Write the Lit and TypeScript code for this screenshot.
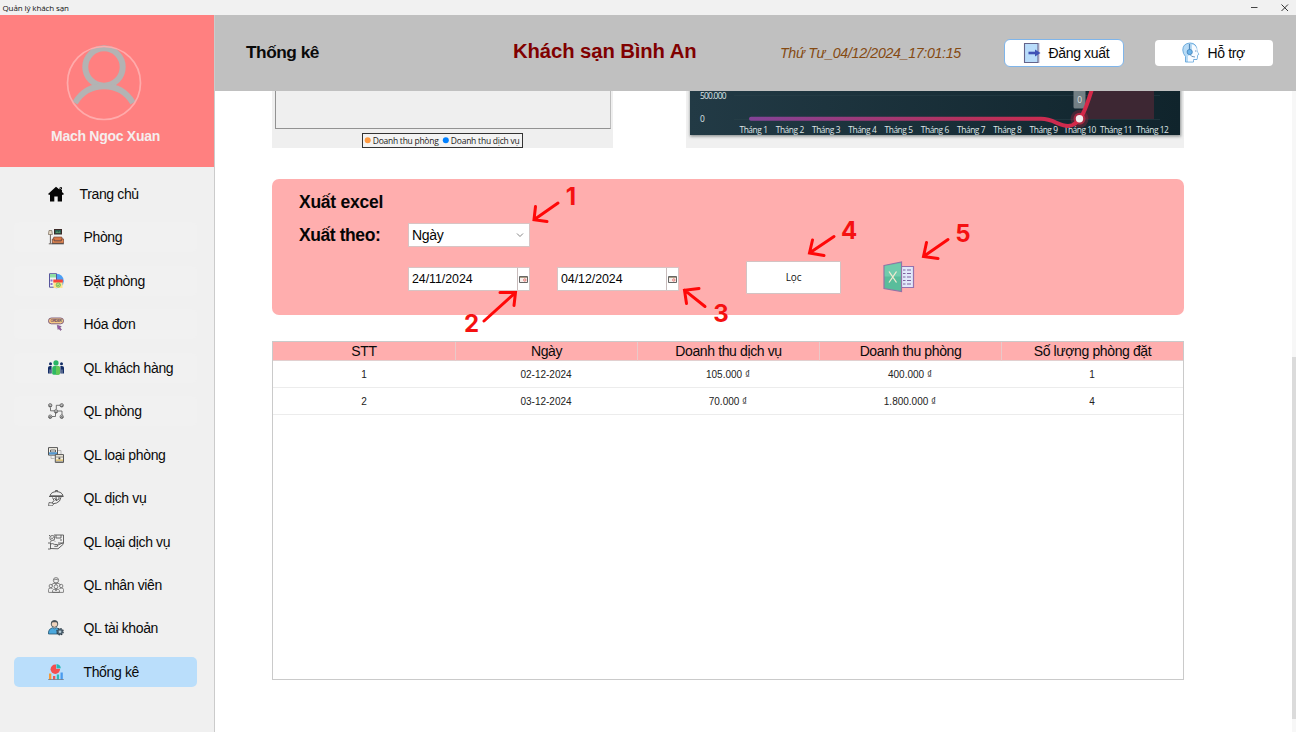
import { LitElement, html, css, svg } from "lit";
import { customElement } from "lit/decorators.js";
import { classMap } from "lit/directives/class-map.js";

const icons = {
  home: svg`<path d="M8 .8 0 8l1.2 1 .8-.6V15.500h4.300V10.500h3.400v5H14V8.400l.8.6L16 8l-2-1.900V1.300h-2.600v2.300z" fill="#050505"/><path d="m10.800 1 3.500 3.200" stroke="#efefef" stroke-width=".6"/>`,
  room: svg`<path d="M6 0h8v5.500H6z" fill="#3b2a28"/><path d="M7 1h6v3.500H7z" fill="#2c5b50"/><path d="m7.500 4 1.500-2 1.500 1.500L11.500 2l1 2z" fill="#57956a"/><path d="M1 1.500h2.800l.6 4H.4z" fill="#e6dac6" stroke="#645547" stroke-width=".6"/><path d="M2.400 5.500v9M.8 14.800h3.300" stroke="#5a504b" stroke-width=".9"/><path d="M5.800 8h8l1 3.500H5z" fill="#d97745" stroke="#6a3e30" stroke-width=".6"/><path d="M4.300 10h1.800v2h7.300v-2h2.300v4.200H4.300z" fill="#e48b56" stroke="#6a3e30" stroke-width=".7"/><path d="M4 14.800h11.800" stroke="#222" stroke-width=".8"/>`,
  booking: svg`<circle cx="8.500" cy="8" r="7.300" fill="#4c9ff5"/><path d="M1.500.7h7v13.500h-7z" fill="#ecf5f4" stroke="#57559c"/><path d="M2 1h6v3.500H2z" fill="#8fdda4"/><path d="M2.500 6.500h2v2h-2zM2.500 10h2v2h-2z" fill="#8e73ce"/><path d="M5.500 8h9v7h-9z" fill="#ffe58d"/><path d="M5.300 6.500h9.500v3H5.300z" fill="#f4443d"/><circle cx="10.300" cy="12" r="2.200" fill="#bce57b" stroke="#62ae59" stroke-width=".7"/><path d="m9.300 12 .8.8 1.300-1.400" fill="none" stroke="#42884a" stroke-width=".6"/>`,
  order: svg`<rect x=".5" y="2" width="15" height="5.800" rx="2.800" fill="#f6ca83" stroke="#785579" stroke-width=".9"/><text x="2.500" y="6.200" font-family="Liberation Sans" font-size="3.500" font-weight="700" fill="#604365" textLength="11">ORDER</text><path d="m9.300 9.200 4 1.400-1.400 1 1.600 2-1.100.9-1.500-2-.9 1z" fill="#995eae" stroke="#694371" stroke-width=".5"/>`,
  customers: svg`<circle cx="2.500" cy="3.800" r="1.500" fill="#132d66"/><circle cx="13.500" cy="3.800" r="1.500" fill="#132d66"/><path d="M0 13.500V7.800Q0 6 2 6h1.600v7.500zM12.400 13.500V6H14q2 0 2 1.800v5.700z" fill="#132d66"/><circle cx="8" cy="2.900" r="2.600" fill="#29b564"/><path d="M4.200 14V8q0-2 2-2h3.600q2 0 2 2v6l-1.500.8H5.500z" fill="#2db862"/><path d="M8 6h2q2 0 2 2v6l-1.500.8H8z" fill="#63c755"/><path d="M2 9.500v4M14 9.500v4" stroke="#efefef" stroke-width=".6"/>`,
  network: svg`<g fill="none" stroke="#555" stroke-width=".8"><path d="M2.500 4.500v3.300H6M12 2.300H8.300V6M10 8h4v4M7.500 10v3.500H4"/>${[[2.200, 2.300], [13.700, 2.300], [8, 8.300], [2.200, 13.700], [13.700, 13.700]].map(([x, y]) => svg`<circle cx=${x} cy=${y} r="1.700"/><path d="M${x - 0.9} ${y + 0.4} ${x} ${y - 0.7}l1 1.100v.9h-2z"/>`)}</g>`,
  roomTypes: svg`<path d="M.5.600h9v7.500h-9z" fill="#f7f3e9" stroke="#555"/><path d="M2.500 3h5v2h-5z" fill="#fff" stroke="#444" stroke-width=".8"/><path d="M1 5.300h8v2.200H1z" fill="#5399d3"/><path d="M7.300 7.600h8.200v7.800H7.300z" fill="#f4efe1" stroke="#555"/><path d="M7.500 10h8M7.500 14.200h8" stroke="#666" stroke-width=".7"/><path d="M10.500 10.500h1.800v2h-1.800z" fill="#444"/><path d="M8 12.500h7v1.300H8z" fill="#dfbe66"/><path d="M3 8.500v3h3.500M10 3.500h3v3.500" fill="none" stroke="#999" stroke-width=".6"/>`,
  service: svg`<g fill="none" stroke="#4b4b4b" stroke-width=".9"><path d="M2 5.800Q3 1.800 8.500 1.600 14 1.800 15 5.800zM1 6.500h14.600M7.500 1.500V.500h2v1"/><path d="M4.500 7.500 6 10.500 4 13M13 7.200 11.500 11 8.500 13 5 13.800M8 7l.5 3.500L11 9V7M6.500 8l2 3"/></g><path d="m1 12.500 3.500.5 1 1.500-1.500 1.300H.5z" fill="#efefef" stroke="#555" stroke-width=".8"/>`,
  serviceTypes: svg`<g fill="none" stroke="#555" stroke-width=".9"><path d="M6 1h9.500v8H10M8 1v3h5V1M12 6h2"/><circle cx="4.300" cy="4" r="2.500"/><path d="m3.200 4 1 .8 1.300-1.600M1 1l1 1M6 6.500l1 1M3 7l-.5 1.500"/><path d="M0 9h2.500v6H0M2.500 10q2-1 4 .4l3 .2v1.700H6.300M10 11l4.600-2 .9 1-5.500 4.800-7.500-.3"/></g>`,
  staff: svg`<g fill="none" stroke="#606060" stroke-width=".75"><circle cx="8" cy="3.300" r="2.700"/><path d="M4 8.500V7.500Q4 6.200 8 6.200t4 1.300v1M5.800 3q2-1.500 4.400 0M8 6v2"/><circle cx="2.800" cy="9" r="1.700"/><circle cx="8" cy="9.700" r="1.900"/><circle cx="13.200" cy="9" r="1.700"/><path d="M.4 15v-2.500q0-1.500 2.300-1.500 1.500 0 2 1M15.600 15v-2.500q0-1.500-2.300-1.500-1.500 0-2 1M4.600 15.400V13.500Q4.600 12 8 12t3.400 1.500v1.900zM.4 15.400h15.200M7 12l1 2 1-2"/></g>`,
  account: svg`<circle cx="6.500" cy="4" r="3.300" fill="#f0d3bc" stroke="#34444d" stroke-width=".8"/><path d="M3 4Q2.800.300 6.500.300T10 4L8.500 2.300h-4z" fill="#485158"/><path d="M.5 14v-2q0-3 4-4.300l2 1 2-1q4 1.300 4 4.300v2z" fill="#4ba8dd" stroke="#275771" stroke-width=".8"/><circle cx="12" cy="11.700" r="3" fill="#4d6271"/><circle cx="12" cy="11.700" r="3.200" fill="none" stroke="#2c3a45" stroke-width="1.200" stroke-dasharray="1.500 1"/><circle cx="12" cy="11.700" r="1.300" fill="#b8cbd5"/>`,
  stats: svg`<circle cx="7.300" cy="5.300" r="4.700" fill="#f54e4e"/><path d="M8 4.800V-.2q4.700.6 5 5z" fill="#badefb"/><path d="M8.500 4.300V0q4 .5 4.300 4.300z" fill="#27b8b5"/><path d="M1 9.500h2.300v6H1z" fill="#f89a36"/><path d="M5 12h2.300v3.500H5z" fill="#ef5454"/><path d="M8.800 10.500h2.300v5H8.800z" fill="#2ebbb6"/><path d="M12.500 8.500h2.300v7h-2.300z" fill="#4a9bee"/><path d="M.2 15.600h15.600" stroke="#6d707b" stroke-width=".8"/>`,
};

const menu: { label: string; icon: unknown; kind?: string }[] = [
  { label: "Trang chủ", icon: icons.home, kind: "home" },
  { label: "Phòng", icon: icons.room, kind: "soft" },
  { label: "Đặt phòng", icon: icons.booking, kind: "soft" },
  { label: "Hóa đơn", icon: icons.order, kind: "soft" },
  { label: "QL khách hàng", icon: icons.customers, kind: "soft" },
  { label: "QL phòng", icon: icons.network, kind: "soft" },
  { label: "QL loại phòng", icon: icons.roomTypes },
  { label: "QL dịch vụ", icon: icons.service },
  { label: "QL loại dịch vụ", icon: icons.serviceTypes },
  { label: "QL nhân viên", icon: icons.staff },
  { label: "QL tài khoản", icon: icons.account },
  { label: "Thống kê", icon: icons.stats, kind: "active" },
];

const columns = ["STT", "Ngày", "Doanh thu dịch vụ", "Doanh thu phòng", "Số lượng phòng đặt"];
const rows = [
  ["1", "02-12-2024", "105.000 ₫", "400.000 ₫", "1"],
  ["2", "03-12-2024", "70.000 ₫", "1.800.000 ₫", "4"],
];

@customElement("side-menu")
class SideMenu extends LitElement {
  static styles = css`
    :host { display: flex; flex-direction: column; width: 214px; border-right: 1px solid #cbcbcb; background: #f0f0f0; font-family: "Liberation Sans", sans-serif; }
    .profile { height: 152px; box-sizing: border-box; padding-top: 30px; background: #ff8080; display: flex; flex-direction: column; align-items: center; }
    .avatar { width: 76px; height: 76px; margin-right: 6px; }
    .name { margin: 6px 3px 0 0; font: 700 14px/18px "Liberation Sans", sans-serif; letter-spacing: -.28px; color: #f5eeee; white-space: nowrap; }
    .menu { display: grid; gap: 13.450px; padding: 12px 17px 0 14px; }
    .item { height: 30px; border-radius: 5px; display: flex; align-items: center; gap: 19.500px; padding-left: 34px; font-size: 14px; letter-spacing: -.36px; color: #0a0a0a; white-space: nowrap; }
    .home { gap: 15.500px; }
    .soft { background: #f1f1f1; }
    .active { background: #badefb; }
    .icon { width: 16px; height: 16px; flex: none; }
  `;
  render() {
    return html`
      <div class="profile">
        <svg class="avatar" viewBox="0 0 76 76" fill="none">
          <circle cx="38" cy="22" r="18.700" stroke="#b3b3b3" stroke-width="6"/>
          <path d="M9 58Q19 41.300 38 41.300T67 58" stroke="#b3b3b3" stroke-width="6"/>
          <circle cx="38" cy="38" r="36.500" stroke="#ffabab" stroke-width="1.700"/>
        </svg>
        <div class="name">Mach Ngoc Xuan</div>
      </div>
      <div class="menu">
        ${menu.map((m) => html`<div class=${classMap({ item: true, [m.kind ?? "plain"]: true })}>
          <svg class="icon" viewBox="0 0 16 16">${m.icon}</svg><span>${m.label}</span></div>`)}
      </div>`;
  }
}

@customElement("revenue-charts")
class RevenueCharts extends LitElement {
  static styles = css`
    :host { display: flex; justify-content: space-between; width: 912px; height: 57px; }
    .bar { width: 341px; height: 57px; background: #efefef; box-sizing: border-box; padding: 0 2.500px 0 3px; display: flex; flex-direction: column; align-items: center; }
    .plot { align-self: stretch; height: 38px; box-sizing: border-box; border: 1px solid #929292; border-top: 0; border-right: 1.500px solid #bdbdbd; }
    .legend { display: block; width: 161px; height: 15px; margin-top: 4px; }
    .line { display: block; width: 498px; height: 57px; background: #f0f0f0; }
    .txt { font-family: "Open Sans", "Noto Sans", sans-serif; }
  `;
  render() {
    return html`
      <div class="bar">
        <div class="plot"></div>
        <svg class="legend" viewBox="0 0 161 15">
          <rect x=".5" y=".5" width="160" height="14" fill="#f3f3f3" stroke="#333"/>
          <circle cx="5.700" cy="7.300" r="3" fill="#ff9b42"/><circle cx="83.800" cy="7.300" r="3" fill="#0080ff"/>
          <g class="txt" font-size="8.500" fill="#222">
            <text x="10.800" y="10.600" textLength="66">Doanh thu phòng</text>
            <text x="88.800" y="10.600" textLength="69">Doanh thu dịch vụ</text>
          </g>
        </svg>
      </div>
      <svg class="line" viewBox="0 0 498 57">
        <defs>
          <linearGradient id="bg"><stop offset="0" stop-color="#223a45"/><stop offset="1" stop-color="#10242c"/></linearGradient>
          <linearGradient id="stroke" gradientUnits="userSpaceOnUse" x1="63" y1="0" x2="420" y2="0"><stop offset="0" stop-color="#834397"/><stop offset=".6" stop-color="#b5325f"/><stop offset="1" stop-color="#d92846"/></linearGradient>
          <filter id="shade" x="-5%" y="-20%" width="110%" height="150%"><feGaussianBlur stdDeviation="1.500"/></filter>
        </defs>
        <rect x="4" y="-10" width="491" height="55.500" fill="#8d9292" filter="url(#shade)"/>
        <rect x="4" y="-2" width="490" height="46" fill="url(#bg)"/>
        <path d="M48 4.500h426M48 28.500h426" stroke="#2b424a" stroke-width=".5"/>
        <path d="M392 28Q400 20 405 0h63v28z" fill="#3d2733"/>
        <g class="txt" fill="#dfe5e7" font-size="8.400">
          <text x="14" y="7.500" textLength="26.500">500.000</text><text x="14" y="31">0</text>
          ${Array.from({ length: 12 }, (_, i) => svg`<text x=${67.700 + i * 36.260} y="42.300" text-anchor="middle" textLength=${i > 8 ? 32.500 : 28.500}>Tháng ${i + 1}</text>`)}
        </g>
        <rect x="387.500" y="-4" width="12" height="21.500" rx="1.500" fill="#738085"/>
        <text class="txt" x="393.500" y="11.800" text-anchor="middle" font-size="8.300" fill="#e0e4e4">0</text>
        <path d="M65 27.800H355C368 27.800 372 35 382 35C395 35 401 14 406-2" fill="none" stroke="url(#stroke)" stroke-width="4" stroke-linecap="round"/>
        <circle cx="393.500" cy="27.800" r="9" fill="#d92846" fill-opacity=".25"/><circle cx="393.500" cy="27.800" r="6" fill="#d92846" fill-opacity=".65"/><circle cx="393.500" cy="27.800" r="3.700" fill="#f3eeee"/>
      </svg>`;
  }
}

@customElement("export-panel")
class ExportPanel extends LitElement {
  static styles = css`
    :host { position: relative; display: block; box-sizing: border-box; width: 912px; height: 135.500px; padding: 11px 0 0 27px; border-radius: 7px; background: #ffaeae; color: #050505; font-family: "Liberation Sans", sans-serif; }
    .title { font: 700 17.500px/24px "Liberation Sans", sans-serif; letter-spacing: -.25px; }
    .mode { display: grid; grid-template-columns: 108.500px 122px; align-items: center; margin-top: 8.500px; height: 25px; }
    .caption { font-weight: 700; font-size: 17.500px; letter-spacing: -.42px; padding-top: 1.500px; }
    .select { height: 24px; box-sizing: border-box; border: 1px solid #d8c4c4; background: #fff; display: flex; align-items: center; justify-content: space-between; padding: 0 5px 0 3.500px; font-size: 14px; letter-spacing: -.3px; }
    .chev { width: 8px; height: 8px; }
    .filters { display: flex; align-items: center; height: 33px; margin-top: 13.500px; padding-left: 108.500px; }
    .date { display: flex; width: 122px; height: 24px; margin: 3px 27px 0 0; box-sizing: border-box; border: 1px solid #d8c4c4; background: #fff; font-size: 12.400px; letter-spacing: -.05px; align-items: center; }
    .value { flex: 1; padding-left: 3.500px; }
    .cal { width: 11px; height: 22px; border-left: 1px solid #c8bcbc; display: grid; place-items: center; }
    .calicon { width: 9px; height: 7px; }
    .apply { width: 95px; height: 33px; margin-left: 40.500px; box-sizing: border-box; border: 1px solid #d3c3c3; border-radius: 1px; background: #fff; display: grid; place-items: center; font: 10px/12px "Open Sans", sans-serif; letter-spacing: -.1px; padding-bottom: 1px; color: #111; }
    .excel { width: 32px; height: 32px; margin: 0 0 1px 42px; }
    .notes { position: absolute; left: 0; top: 0; width: 912px; height: 160px; overflow: visible; }
  `;
  private date(value: string) {
    return html`<div class="date"><span class="value">${value}</span><span class="cal">
      <svg class="calicon" viewBox="0 0 9 7"><path d="M.5.500h8v6h-8z" fill="#f6f0ed" stroke="#555" stroke-width=".9"/><path d="M1 1.500h7" stroke="#a99c83"/><circle cx="5.800" cy="4" r="1.200" fill="none" stroke="#e05d59" stroke-width=".8"/></svg></span></div>`;
  }
  render() {
    const notes = [
      ["1", 299, 26, "M286 24 262 40.700M263.500 27.500 262 40.700 275 42.500"],
      ["2", 199.500, 152.500, "M212 142 243 114M228 113.500 243.500 113.500 242 126.500"],
      ["3", 449, 142.500, "M433 127.500 412.500 111.200M427 109.500 412.500 111.200 414.500 124.500"],
      ["4", 577, 60, "M562 57.500 537.500 74M540.500 61 537.500 74 552 76.500"],
      ["5", 691, 63, "M676 60.500 651.500 77.500M654.500 63.500 651.500 77.500 666 79.500"],
    ] as const;
    return html`
      <div class="title">Xuất excel</div>
      <div class="mode"><span class="caption">Xuất theo:</span><div class="select">Ngày<svg class="chev" viewBox="0 0 8 8"><path d="m1 2.500 3 3 3-3" fill="none" stroke="#777" stroke-width=".9"/></svg></div></div>
      <div class="filters">
        ${this.date("24/11/2024")}${this.date("04/12/2024")}
        <div class="apply">Lọc</div>
        <svg class="excel" viewBox="0 0 32 32">
          <path d="M18 5.500h12.500v21H18z" fill="#e1e8fa" stroke="#9572ad" stroke-width="1.200"/>
          <path d="M20 9h2.500M24 9h4M20 12.500h2.500M24 12.500h4M20 16h2.500M24 16h4M20 19.500h2.500M24 19.500h4M20 23h2.500M24 23h4" stroke="#7e64a0" stroke-width="1.100"/>
          <path d="M1 4.500 18.500 1v29.500L1 27.500z" fill="#59bd9b" stroke="#9273a7" stroke-width="1.200"/>
          <path d="M1.700 5 17.800 2v13.500H1.700z" fill="#70cbac"/>
          <path d="m6 10.500 7.500 11M13.500 10.500 6 21.500" stroke="#f1ead0" stroke-width="1.300"/>
        </svg>
      </div>
      <svg class="notes" viewBox="0 0 912 160">
        ${notes.map(([n, x, y, d]) => svg`<path d=${d} fill="none" stroke="#ff0808" stroke-width="3" stroke-linecap="round" stroke-linejoin="miter"/><text x=${x} y=${y} text-anchor="middle" font-family="Inter, sans-serif" font-size="24" font-weight="700" fill="#f51111">${n}</text>`)}
      </svg>`;
  }
}

@customElement("app-root")
class AppRoot extends LitElement {
  static styles = css`
    :host { display: flex; flex-direction: column; width: 1296px; height: 732px; overflow: hidden; background: #fff; font-family: "Liberation Sans", sans-serif; color: #0a0a0a; }
    .titlebar { height: 15px; flex: none; background: #f1f1f1; display: flex; align-items: center; justify-content: space-between; padding: 0 7px 0 2.500px; }
    .caption { font: 8px/15px "Open Sans", sans-serif; color: #111; letter-spacing: -.11px; }
    .controls { width: 38px; height: 9px; }
    .body { flex: 1; display: flex; min-height: 0; }
    .main { flex: 1; display: flex; flex-direction: column; min-width: 0; }
    .header { height: 76px; flex: none; background: #c0c0c0; display: grid; grid-template-columns: 267px 267px 224px 151px 118px; align-items: center; padding-left: 31px; white-space: nowrap; }
    .page { font-size: 17.300px; font-weight: 700; letter-spacing: -.48px; padding-bottom: 2px; }
    .hotel { font-size: 20.300px; font-weight: 700; letter-spacing: -.1px; color: #800000; padding-bottom: 3px; }
    .clock { font-size: 14.200px; font-style: italic; letter-spacing: -.32px; color: #854a12; padding-bottom: 1px; }
    .btn { height: 26px; width: 118px; box-sizing: border-box; border-radius: 4px; background: #fff; display: flex; align-items: center; font-size: 14px; letter-spacing: -.35px; }
    .logout { height: 28px; width: 120px; border: 1.500px solid #7fb5ea; border-radius: 6px; padding-left: 17px; gap: 6.500px; }
    .help { padding-left: 26px; gap: 6.500px; }
    .bicon { width: 20px; height: 22px; flex: none; }
    .scroll { flex: 1; display: flex; justify-content: space-between; min-height: 0; }
    .content { padding-left: 57px; display: flex; flex-direction: column; }
    .panel { margin-top: 31px; }
    .table { width: 912px; height: 339px; margin-top: 26.500px; box-sizing: border-box; border: 1px solid #cacaca; }
    .row { display: grid; grid-template-columns: repeat(5, 1fr); height: 27px; box-sizing: border-box; border-bottom: 1px solid #ececec; align-items: center; text-align: center; font-size: 10px; color: #222; padding-top: 1px; }
    .head { height: 19px; padding-top: 0; background: #ffaeae; border-bottom: 1px solid #e2d0d0; font-size: 14px; letter-spacing: -.38px; color: #0a0a0a; align-items: stretch; line-height: 19px; }
    .cell { box-sizing: border-box; }
    .th + .th { border-left: 1px solid #e9c9c9; }
    .track { width: 4px; background: #f7f7f7; padding-top: 266px; box-sizing: border-box; }
    .thumb { height: 362px; background: #dbdbdb; }
  `;
  render() {
    return html`
      <div class="titlebar"><span class="caption">Quản lý khách sạn</span>
        <svg class="controls" viewBox="0 0 38 9"><path d="M0 4.500h6.500" stroke="#444"/><path d="m30.500 1.500 6.500 6.500m0-6.500L30.500 8" stroke="#333"/></svg></div>
      <div class="body">
        <side-menu></side-menu>
        <div class="main">
          <div class="header">
            <div class="page">Thống kê</div>
            <div class="hotel">Khách sạn Bình An</div>
            <div class="clock">Thứ Tư_04/12/2024_17:01:15</div>
            <div class="btn logout"><svg class="bicon" viewBox="0 0 20 22"><path d="M2 1h16v20H2z" fill="#deddea"/><path d="M2.500 1.500H16v19H2.500z" fill="#b9dcfa" stroke="#64648b" stroke-width="1.100"/><path d="M6.500 11h8" stroke="#3f51b5" stroke-width="2.600"/><path d="m13 7.500 5.500 3.500-5.500 3.500z" fill="#3f51b5"/></svg>Đăng xuất</div>
            <div class="btn help"><svg class="bicon" viewBox="0 0 20 22" fill="none"><path d="M4.500 14.500v5.500h8v-2.500h3.500l.5-4 1.200-1-1.700-3.500q0-8-7-8-7.200.5-7.200 7 0 3.500 2.700 6.500z" fill="#b7dbf6" stroke="#64a6da" stroke-width=".9"/><path d="M11 2.500q5 1 5 6.500l1.200 3-1 1-.5 4h-3.500v2.500H7V14l4-2z" fill="#f8fbff"/><path d="M8.500 2v6" stroke="#5189ba" stroke-width="1.200"/><circle cx="8.700" cy="10" r="2.600" fill="#6bb4ea" stroke="#4988bd" stroke-width=".9"/><path d="M9 12.500q1 2.500 5 2.500M14 9h1.500" stroke="#4f82ae" stroke-width=".8"/></svg>Hỗ trợ</div>
          </div>
          <div class="scroll">
            <div class="content">
              <revenue-charts></revenue-charts>
              <export-panel class="panel"></export-panel>
              <div class="table">
                <div class="row head">${columns.map((c) => html`<div class="cell th">${c}</div>`)}</div>
                ${rows.map((r) => html`<div class="row">${r.map((c) => html`<div class="cell">${c}</div>`)}</div>`)}
              </div>
            </div>
            <div class="track"><div class="thumb"></div></div>
          </div>
        </div>
      </div>`;
  }
}
